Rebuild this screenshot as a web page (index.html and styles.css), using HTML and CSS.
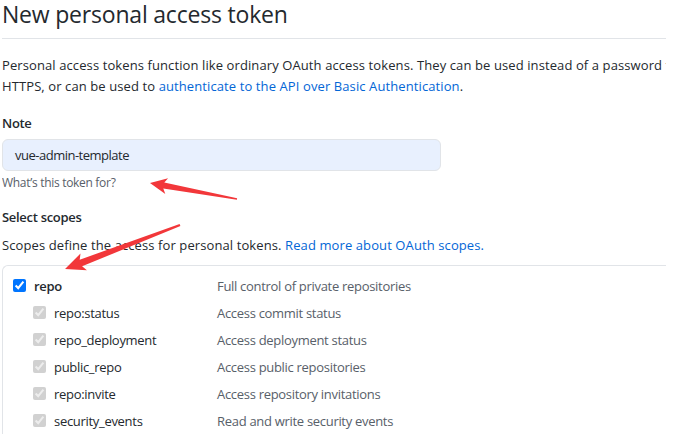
FILE: index.html
```html
<!DOCTYPE html>
<html>
<head>
<meta charset="utf-8">
<link rel="stylesheet" href="styles.css">
</head>
<body>
<div class="page">
  <div class="clip">
    <div class="content">
      <h2 class="title">New personal access token</h2>
      <p class="intro">Personal access tokens function like ordinary OAuth access tokens. They can be used instead of a password for Git over HTTPS, or can be used to <a href="#">authenticate to the API over Basic Authentication</a>.</p>
      <div class="field">
        <label class="label">Note</label>
        <div class="input">vue-admin-template</div>
        <div class="hint">What’s this token for?</div>
      </div>
      <div class="field scopes-field">
        <div class="label">Select scopes</div>
        <p class="scopes-desc">Scopes define the access for personal tokens. <a href="#">Read more about OAuth scopes.</a></p>
        <div class="scopes">
          <div class="row">
            <label class="name main"><input type="checkbox" checked><span>repo</span></label>
            <span class="desc">Full control of private repositories</span>
          </div>
          <div class="row">
            <label class="name sub"><input type="checkbox" checked disabled><span>repo:status</span></label>
            <span class="desc">Access commit status</span>
          </div>
          <div class="row">
            <label class="name sub"><input type="checkbox" checked disabled><span>repo_deployment</span></label>
            <span class="desc">Access deployment status</span>
          </div>
          <div class="row">
            <label class="name sub"><input type="checkbox" checked disabled><span>public_repo</span></label>
            <span class="desc">Access public repositories</span>
          </div>
          <div class="row">
            <label class="name sub"><input type="checkbox" checked disabled><span>repo:invite</span></label>
            <span class="desc">Access repository invitations</span>
          </div>
          <div class="row">
            <label class="name sub"><input type="checkbox" checked disabled><span>security_events</span></label>
            <span class="desc">Read and write security events</span>
          </div>
        </div>
      </div>
    </div>
  </div>
  <svg class="arrows" width="688" height="436" viewBox="0 0 688 436">
    <polygon points="150,183 168.1,178.2 164.3,182.6 237.1,198.2 236.9,199.8 163.3,188.5 165.3,194" />
    <polygon points="65,269 80.5,253.5 79.7,259.7 179.6,224.1 180.4,225.9 82.1,266.3 86.9,270.3" />
  </svg>
</div>
</body>
</html>
```

FILE: styles.css
```css
html, body {
  margin: 0;
  padding: 0;
  background: #fff;
}
body {
  font-family: "Open Sans", "Noto Sans", sans-serif;
  font-size: 13px;
  letter-spacing: -0.3px;
  color: #24292e;
  overflow: hidden;
  width: 688px;
  height: 436px;
}
.page {
  position: relative;
  width: 688px;
  height: 436px;
  padding-left: 2px;
  box-sizing: border-box;
}
.clip {
  width: 664px;
  height: 436px;
  overflow: hidden;
}
.content {
  width: 820px;
}
.title {
  margin: 0;
  font-size: 23px;
  font-weight: 400;
  line-height: 28px;
  padding-bottom: 10px;
  border-bottom: 1px solid #e1e4e8;
  width: 664px;
  letter-spacing: -0.2px;
}
.intro {
  margin: 16px 0 0;
  line-height: 21px;
  width: 770px;
  letter-spacing: 0.1px;
}
a {
  color: #0366d6;
  text-decoration: none;
}
.field {
  margin-top: 16px;
}
.label {
  display: block;
  font-weight: 600;
  line-height: 21px;
}
.input {
  margin-top: 5px;
  width: 439px;
  height: 32px;
  box-sizing: border-box;
  background: #e8f0fe;
  border: 1px solid #e1e4e8;
  border-radius: 6px;
  padding: 0 12px;
  line-height: 30px;
  letter-spacing: -0.5px;
}
.hint {
  margin-top: 3px;
  font-size: 12px;
  line-height: 18px;
  color: #586069;
}
.scopes-field {
  margin-top: 15px;
}
.scopes-desc {
  margin: 7px 0 0;
  line-height: 21px;
  letter-spacing: 0.1px;
}
.scopes {
  margin-top: 9px;
  border-top: 1px solid #e1e4e8;
  border-left: 1px solid #e1e4e8;
  border-top-left-radius: 6px;
  padding-top: 6px;
}
.row {
  display: grid;
  grid-template-columns: 214px 1fr;
  align-items: center;
  height: 27px;
}
.name {
  display: flex;
  align-items: center;
  gap: 8px;
}
.name input {
  margin: 0;
  width: 13px;
  height: 13px;
}
.main {
  padding-left: 10px;
  font-weight: 600;
}
.sub {
  padding-left: 30px;
}
.desc {
  color: #586069;
}
.arrows {
  position: absolute;
  left: 0;
  top: 0;
  pointer-events: none;
}
.arrows polygon {
  fill: #f2373a;
}
```
